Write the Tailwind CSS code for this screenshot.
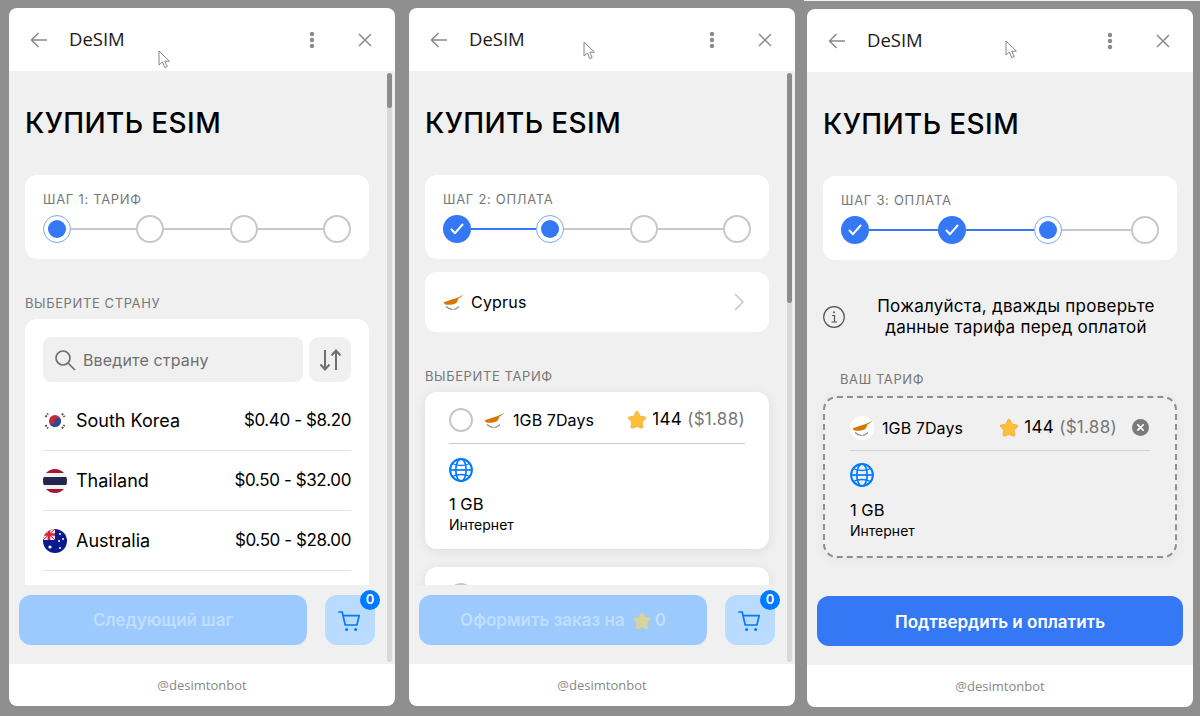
<!DOCTYPE html>
<html lang="ru">
  <head>
    <meta charset="UTF-8" />
    <meta name="viewport" content="width=device-width, initial-scale=1.0" />
    <title>DeSIM</title>
    <script src="https://cdn.jsdelivr.net/npm/@tailwindcss/browser@4"></script>
  </head>
  <body class="relative w-[1200px] h-[716px] overflow-hidden bg-[#8f8f8f] font-['Inter','Noto_Sans',sans-serif] text-black">
    <!-- shared icons -->
    <svg class="hidden">
      <symbol id="back" viewBox="0 0 18 16"><path d="M17 8H1.500M8.500 1 1.500 8l7 7" fill="none" stroke="currentColor" stroke-width="1.500" /></symbol>
      <symbol id="close" viewBox="0 0 14 14"><path d="M1 1l12 12M13 1 1 13" fill="none" stroke="currentColor" stroke-width="1.500" /></symbol>
      <symbol id="dots" viewBox="0 0 6 18"><circle cx="3" cy="3" r="2.200" fill="currentColor" /><circle cx="3" cy="9" r="2.200" fill="currentColor" /><circle cx="3" cy="15" r="2.200" fill="currentColor" /></symbol>
      <symbol id="cursor" viewBox="0 0 14 20"><path d="M1 1v14l3.400-3 2.400 5.600 2.400-1-2.400-5.400h4.600z" fill="#fff" stroke="#777" stroke-width=".9" /></symbol>
      <symbol id="check" viewBox="0 0 14 12"><path d="M1.500 6.500 5 10.200 12.500 1.500" fill="none" stroke="#fff" stroke-width="2" stroke-linecap="round" stroke-linejoin="round" /></symbol>
      <symbol id="cart" viewBox="0 0 24 22"><path d="M1 2h3.200l3 13h11.600l2.400-9.400H5" fill="none" stroke="currentColor" stroke-width="1.700" stroke-linecap="round" stroke-linejoin="round" /><circle cx="8.600" cy="19.600" r="1.500" fill="currentColor" /><circle cx="17.600" cy="19.600" r="1.500" fill="currentColor" /></symbol>
      <symbol id="globe" viewBox="0 0 24 24"><g fill="none" stroke="currentColor"><circle cx="12" cy="12" r="10.900" stroke-width="2" /><ellipse cx="12" cy="12" rx="5.200" ry="11" stroke-width="1.700" /><path d="M1 12h22" stroke-width="1.700" /><path d="M3.500 5.500c2.500 1.500 5.200 2 8.500 2s6-.5 8.500-2M3.500 18.500c2.500-1.500 5.200-2 8.500-2s6 .5 8.500 2" stroke-width="1.400" /></g></symbol>
      <symbol id="star" viewBox="0 0 20 20"><path d="M10 1.200c.6 0 1 .4 1.300 1l1.900 4 4.300.6c1.300.2 1.700 1.400.8 2.300l-3.100 3 .8 4.400c.2 1.300-1 2.100-2.100 1.500L10 16.400l-3.900 1.600c-1.100.6-2.300-.2-2.100-1.500l.8-4.400-3.100-3c-.9-.9-.5-2.100.8-2.300l4.300-.6 1.900-4c.3-.6.7-1 1.300-1z" fill="#fbbf3c" stroke="#f0a020" stroke-width=".6" /></symbol>
      <symbol id="star-muted" viewBox="0 0 20 20"><path d="M10 1.200c.6 0 1 .4 1.300 1l1.900 4 4.300.6c1.300.2 1.700 1.400.8 2.300l-3.100 3 .8 4.400c.2 1.300-1 2.100-2.100 1.500L10 16.400l-3.900 1.600c-1.100.6-2.300-.2-2.100-1.500l.8-4.400-3.100-3c-.9-.9-.5-2.100.8-2.300l4.300-.6 1.900-4c.3-.6.7-1 1.300-1z" fill="#d8d49a" /></symbol>
      <symbol id="cyprus" viewBox="0 0 24 24"><circle cx="12" cy="12" r="12" fill="#fff" /><path d="M2.500 12.500c2.500-1.200 4-1.800 6-2.300 2-.4 3-1 5-1.400 3-.8 6-2.300 9-4.300-1.500 2-3.500 3.400-5.500 4.500-.3 1.500-.5 3.500-2.500 4.500-2.500 1.200-6 1.500-9 1.200-1.500-.2-2.500-1-3-2.700z" fill="#d57800" /><path d="M5 16.500c2 2 4.500 2.800 6.500 3.200M18 16.500c-2 2-4 2.800-5.500 3.200" fill="none" stroke="#8a9a80" stroke-width="1.300" /></symbol>
      <symbol id="chevron" viewBox="0 0 10 18"><path d="M1 1l8 8-8 8" fill="none" stroke="currentColor" stroke-width="1.500" /></symbol>
    </svg>

    <!-- edge of the next picture in the collage -->
    <div class="absolute top-0 right-0 left-[804px] h-[1px] bg-[#f4f4f4]"></div>

    <div class="flex items-start pl-[9px] pt-[8px]">
      <!-- step 1 -->
      <section class="relative flex h-[698px] w-[386px] shrink-0 flex-col overflow-hidden rounded-lg bg-white">
        <header class="flex h-[63px] shrink-0 items-center pl-[21px] pr-[23px]">
          <svg class="h-[16px] w-[18px] text-[#8a8a8a]"><use href="#back" /></svg>
          <span class="ml-[21px] pb-[2px] font-['Open_Sans',sans-serif] text-[18.500px] font-medium text-[#1a1a1a]">DeSIM</span>
          <svg class="ml-auto mr-[43px] h-[18px] w-[6px] text-[#8a8a8a]"><use href="#dots" /></svg>
          <svg class="h-[14px] w-[14px] text-[#8a8a8a]"><use href="#close" /></svg>
        </header>
        <main class="relative flex-1 overflow-hidden bg-[#f0f0f0] pl-[16px] pr-[26px]">
          <h1 class="mt-[34px] text-[28px] leading-[36px] font-medium tracking-[0.4px]">КУПИТЬ ESIM</h1>
          <div class="mt-[34px] h-[84px] rounded-[12px] bg-white px-[18px] pt-[16px]">
            <p class="text-[13px] leading-[16px] tracking-[0.7px] text-[#777]">ШАГ 1: ТАРИФ</p>
            <div class="mt-[8px] flex items-center">
              <span class="flex size-[28px] shrink-0 items-center justify-center rounded-full border border-[#7aa7f8]"><span class="size-[18px] rounded-full bg-[#3478f6]"></span></span>
              <span class="h-[2px] flex-1 bg-[#c8c8cc]"></span>
              <span class="size-[28px] shrink-0 rounded-full border-2 border-[#c8c8cc]"></span>
              <span class="h-[2px] flex-1 bg-[#c8c8cc]"></span>
              <span class="size-[28px] shrink-0 rounded-full border-2 border-[#c8c8cc]"></span>
              <span class="h-[2px] flex-1 bg-[#c8c8cc]"></span>
              <span class="size-[28px] shrink-0 rounded-full border-2 border-[#c8c8cc]"></span>
            </div>
          </div>
          <p class="mt-[36px] text-[13px] leading-[16px] tracking-[0.6px] text-[#777]">ВЫБЕРИТЕ СТРАНУ</p>
          <div class="mt-[8px] rounded-[12px] bg-white px-[18px] pt-[18px] pb-[40px]">
            <div class="flex gap-[6px]">
              <div class="flex h-[45px] flex-1 items-center rounded-[8px] bg-[#f0f0f0] pl-[11px] text-[#6f6f6f]">
                <svg class="h-[22px] w-[22px]" viewBox="0 0 22 22" fill="none" stroke="currentColor" stroke-width="1.700"><circle cx="9" cy="9" r="7" /><path d="M14 14l7 7" /></svg>
                <span class="ml-[7px] text-[16px] tracking-[0.15px]">Введите страну</span>
              </div>
              <div class="flex h-[45px] w-[42px] items-center justify-center rounded-[10px] bg-[#f0f0f0] text-[#6f6f6f]">
                <svg class="h-[22px] w-[23px]" viewBox="0 0 23 22" fill="none" stroke="currentColor" stroke-width="2"><path d="M6 1v19M1.500 15.500 6 20.500l4.500-5M17 21V2M12.500 6.500 17 1.500l4.500 5" /></svg>
              </div>
            </div>
            <div class="mt-[9px] flex h-[60px] items-center border-b border-[#e2e2e2] pt-[1px]">
              <svg class="size-[24px]" viewBox="0 0 24 24"><circle cx="12" cy="12" r="6" fill="#c8283c" /><path d="M6 12a3 3 0 0 0 6 0 3 3 0 0 1 6 0 6 6 0 0 1-12 0z" fill="#1f4f9a" /><g stroke="#555" stroke-width="2" stroke-dasharray="2 1"><path d="M2.500 8 5 4.500M19 4.500 21.500 8M2.500 16 5 19.500M19 19.500 21.500 16" /></g></svg>
              <span class="ml-[9px] pb-[1px] text-[18px]">South Korea</span>
              <span class="ml-auto text-[17px] tracking-[-0.4px]">$0.40 - $8.20</span>
            </div>
            <div class="flex h-[60px] items-center border-b border-[#e2e2e2] pt-[1px]">
              <svg class="size-[24px]" viewBox="0 0 24 24"><defs><clipPath id="flag-clip"><circle cx="12" cy="12" r="12" /></clipPath></defs><g clip-path="url(#flag-clip)"><rect width="24" height="24" fill="#f2f2f2" /><rect width="24" height="4" fill="#a8152f" /><rect y="20" width="24" height="4" fill="#a8152f" /><rect y="8" width="24" height="8" fill="#25264f" /></g></svg>
              <span class="ml-[9px] pb-[1px] text-[18px]">Thailand</span>
              <span class="ml-auto text-[17px] tracking-[-0.4px]">$0.50 - $32.00</span>
            </div>
            <div class="flex h-[60px] items-center border-b border-[#e2e2e2] pt-[1px]">
              <svg class="size-[24px]" viewBox="0 0 24 24"><g clip-path="url(#flag-clip)"><rect width="24" height="24" fill="#0a1a8c" /><rect width="12" height="11" fill="#e8e8f0" /><path d="M0 5.500h12M6 0v11" stroke="#d8203a" stroke-width="2.500" /><path d="M0 0l12 11M12 0 0 11" stroke="#d8203a" stroke-width="1" /></g><g fill="#fff"><circle cx="7" cy="18" r="1.600" /><circle cx="17" cy="5" r="1" /><circle cx="20" cy="10" r="1" /><circle cx="16" cy="12" r="1" /><circle cx="17" cy="19" r="1" /></g></svg>
              <span class="ml-[9px] pb-[1px] text-[18px]">Australia</span>
              <span class="ml-auto text-[17px] tracking-[-0.4px]">$0.50 - $28.00</span>
            </div>
          </div>
          <!-- sticky bottom bar -->
          <div class="absolute inset-x-0 bottom-0 flex h-[79px] gap-[18px] bg-[#f0f0f0] pt-[10px] pl-[10px] pr-[20px]">
            <button class="h-[50px] w-[288px] rounded-[12px] bg-[#9ccaff] pt-[1px] text-[17px] font-semibold text-white/40">Следующий шаг</button>
            <div class="relative flex h-[50px] w-[50px] items-center justify-center rounded-[12px] bg-[#b9dbff] text-[#007aff]">
              <svg class="mt-[2px] h-[22px] w-[24px]"><use href="#cart" /></svg>
              <span class="absolute -top-[5px] -right-[5px] flex size-[20px] items-center justify-center rounded-full bg-[#007aff] text-[13px] font-semibold text-white">0</span>
            </div>
          </div>
          <div class="absolute top-[2px] bottom-[2px] right-[3px] w-[5px] rounded-full bg-[#d8d8d8]"><div class="h-[35px] rounded-full bg-[#8c8c8c]"></div></div>
        </main>
        <footer class="flex h-[42px] shrink-0 items-center justify-center pt-[1px] font-['Open_Sans',sans-serif] text-[13px] text-[#888]">@desimtonbot</footer>
        <svg class="absolute top-[42px] left-[149px] h-[20px] w-[14px]"><use href="#cursor" /></svg>
      </section>

      <!-- step 2 -->
      <section class="relative ml-[14px] flex h-[698px] w-[386px] shrink-0 flex-col overflow-hidden rounded-lg bg-white">
        <header class="flex h-[63px] shrink-0 items-center pl-[21px] pr-[23px]">
          <svg class="h-[16px] w-[18px] text-[#8a8a8a]"><use href="#back" /></svg>
          <span class="ml-[21px] pb-[2px] font-['Open_Sans',sans-serif] text-[18.500px] font-medium text-[#1a1a1a]">DeSIM</span>
          <svg class="ml-auto mr-[43px] h-[18px] w-[6px] text-[#8a8a8a]"><use href="#dots" /></svg>
          <svg class="h-[14px] w-[14px] text-[#8a8a8a]"><use href="#close" /></svg>
        </header>
        <main class="relative flex-1 overflow-hidden bg-[#f0f0f0] pl-[16px] pr-[26px]">
          <h1 class="mt-[34px] text-[28px] leading-[36px] font-medium tracking-[0.4px]">КУПИТЬ ESIM</h1>
          <div class="mt-[34px] h-[84px] rounded-[12px] bg-white px-[18px] pt-[16px]">
            <p class="text-[13px] leading-[16px] tracking-[0.7px] text-[#777]">ШАГ 2: ОПЛАТА</p>
            <div class="mt-[8px] flex items-center">
              <span class="flex size-[28px] shrink-0 items-center justify-center rounded-full bg-[#3478f6]"><svg class="h-[12px] w-[14px]"><use href="#check" /></svg></span>
              <span class="h-[2px] flex-1 bg-[#3478f6]"></span>
              <span class="flex size-[28px] shrink-0 items-center justify-center rounded-full border border-[#7aa7f8]"><span class="size-[18px] rounded-full bg-[#3478f6]"></span></span>
              <span class="h-[2px] flex-1 bg-[#c8c8cc]"></span>
              <span class="size-[28px] shrink-0 rounded-full border-2 border-[#c8c8cc]"></span>
              <span class="h-[2px] flex-1 bg-[#c8c8cc]"></span>
              <span class="size-[28px] shrink-0 rounded-full border-2 border-[#c8c8cc]"></span>
            </div>
          </div>
          <div class="mt-[13px] flex h-[60px] items-center rounded-[12px] bg-white pl-[16px] pr-[25px]">
            <svg class="size-[24px]"><use href="#cyprus" /></svg>
            <span class="ml-[6px] text-[16px] tracking-[0.2px]">Cyprus</span>
            <svg class="ml-auto h-[18px] w-[10px] text-[#c4c4c4]"><use href="#chevron" /></svg>
          </div>
          <p class="mt-[36px] text-[13px] leading-[16px] tracking-[0.6px] text-[#777]">ВЫБЕРИТЕ ТАРИФ</p>
          <div class="mt-[8px] h-[157px] rounded-[12px] bg-white px-[24px] pt-[15px] shadow-[0_2px_12px_rgba(0,0,0,0.08)]">
            <div class="flex items-center">
              <span class="size-[24px] shrink-0 rounded-full border-2 border-[#c8c8cc]"></span>
              <svg class="ml-[9px] size-[24px]"><use href="#cyprus" /></svg>
              <span class="ml-[7px] text-[16px] tracking-[0.1px]">1GB 7Days</span>
              <svg class="ml-auto h-[20px] w-[20px]"><use href="#star" /></svg>
              <span class="ml-[5px] text-[17px] tracking-[0.3px]">144 <span class="text-[#777]">($1.88)</span></span>
            </div>
            <div class="mt-[10px] border-t border-[#c8c8c8]"></div>
            <svg class="mt-[14px] size-[24px] text-[#007aff]"><use href="#globe" /></svg>
            <p class="mt-[12px] text-[16.500px] leading-[20px]">1 GB</p>
            <p class="mt-[2px] text-[14px] leading-[18px]">Интернет</p>
          </div>
          <div class="mt-[18px] h-[100px] rounded-[12px] bg-white px-[24px] pt-[16px] shadow-[0_2px_12px_rgba(0,0,0,0.08)]">
            <span class="block size-[24px] rounded-full border-2 border-[#c8c8cc]"></span>
          </div>
          <!-- sticky bottom bar -->
          <div class="absolute inset-x-0 bottom-0 flex h-[79px] gap-[18px] bg-[#f0f0f0] pt-[10px] pl-[10px] pr-[20px]">
            <button class="flex h-[50px] w-[288px] items-center justify-center rounded-[12px] bg-[#9ccaff] pt-[1px] text-[17px] font-semibold text-white/40">Оформить заказ на <svg class="mr-[3px] ml-[7px] h-[20px] w-[20px]"><use href="#star-muted" /></svg> 0</button>
            <div class="relative flex h-[50px] w-[50px] items-center justify-center rounded-[12px] bg-[#b9dbff] text-[#007aff]">
              <svg class="mt-[2px] h-[22px] w-[24px]"><use href="#cart" /></svg>
              <span class="absolute -top-[5px] -right-[5px] flex size-[20px] items-center justify-center rounded-full bg-[#007aff] text-[13px] font-semibold text-white">0</span>
            </div>
          </div>
          <div class="absolute top-[2px] bottom-[2px] right-[3px] w-[5px] rounded-full bg-[#d8d8d8]"><div class="h-[230px] rounded-full bg-[#8c8c8c]"></div></div>
        </main>
        <footer class="flex h-[42px] shrink-0 items-center justify-center pt-[1px] font-['Open_Sans',sans-serif] text-[13px] text-[#888]">@desimtonbot</footer>
        <svg class="absolute top-[33px] left-[174px] h-[20px] w-[14px]"><use href="#cursor" /></svg>
      </section>

      <!-- step 3 -->
      <section class="relative mt-[1px] ml-[12px] flex h-[698px] w-[386px] shrink-0 flex-col overflow-hidden rounded-lg bg-white">
        <header class="flex h-[63px] shrink-0 items-center pl-[21px] pr-[23px]">
          <svg class="h-[16px] w-[18px] text-[#8a8a8a]"><use href="#back" /></svg>
          <span class="ml-[21px] pb-[2px] font-['Open_Sans',sans-serif] text-[18.500px] font-medium text-[#1a1a1a]">DeSIM</span>
          <svg class="ml-auto mr-[43px] h-[18px] w-[6px] text-[#8a8a8a]"><use href="#dots" /></svg>
          <svg class="h-[14px] w-[14px] text-[#8a8a8a]"><use href="#close" /></svg>
        </header>
        <main class="relative flex-1 overflow-hidden bg-[#f0f0f0] px-[16px]">
          <h1 class="mt-[34px] text-[28px] leading-[36px] font-medium tracking-[0.4px]">КУПИТЬ ESIM</h1>
          <div class="mt-[34px] h-[84px] rounded-[12px] bg-white px-[18px] pt-[16px]">
            <p class="text-[13px] leading-[16px] tracking-[0.7px] text-[#777]">ШАГ 3: ОПЛАТА</p>
            <div class="mt-[8px] flex items-center">
              <span class="flex size-[28px] shrink-0 items-center justify-center rounded-full bg-[#3478f6]"><svg class="h-[12px] w-[14px]"><use href="#check" /></svg></span>
              <span class="h-[2px] flex-1 bg-[#3478f6]"></span>
              <span class="flex size-[28px] shrink-0 items-center justify-center rounded-full bg-[#3478f6]"><svg class="h-[12px] w-[14px]"><use href="#check" /></svg></span>
              <span class="h-[2px] flex-1 bg-[#3478f6]"></span>
              <span class="flex size-[28px] shrink-0 items-center justify-center rounded-full border border-[#7aa7f8]"><span class="size-[18px] rounded-full bg-[#3478f6]"></span></span>
              <span class="h-[2px] flex-1 bg-[#c8c8cc]"></span>
              <span class="size-[28px] shrink-0 rounded-full border-2 border-[#c8c8cc]"></span>
            </div>
          </div>
          <div class="mt-[36px] flex items-center">
            <svg class="size-[22px] shrink-0 text-[#555]" viewBox="0 0 22 22" fill="none" stroke="currentColor" stroke-width="1.200"><circle cx="11" cy="11" r="10.300" /><path d="M9 9.500h2.500V16M8.500 16h5.500" /><circle cx="11" cy="6.300" r="1" fill="currentColor" stroke="none" /></svg>
            <p class="flex-1 pl-[10px] text-center text-[17px] leading-[21px] tracking-[0.25px]">Пожалуйста, дважды проверьте<br />данные тарифа перед оплатой</p>
          </div>
          <p class="mt-[33px] pl-[17px] text-[13px] leading-[16px] tracking-[0.6px] text-[#777]">ВАШ ТАРИФ</p>
          <div class="mt-[9px] h-[162px] rounded-[14px] border-2 border-dashed border-[#8f8f8f] px-[25px] pt-[17px] shadow-[0_2px_12px_rgba(0,0,0,0.05)]">
            <div class="flex items-center">
              <svg class="size-[24px]"><use href="#cyprus" /></svg>
              <span class="ml-[8px] text-[16px] tracking-[0.1px]">1GB 7Days</span>
              <svg class="ml-auto h-[20px] w-[20px]"><use href="#star" /></svg>
              <span class="ml-[5px] text-[17px] tracking-[0.3px]">144 <span class="text-[#777]">($1.88)</span></span>
              <svg class="mr-[1px] ml-[15px] size-[17px]" viewBox="0 0 17 17"><circle cx="8.500" cy="8.500" r="8.500" fill="#7a7a7a" /><path d="M5.800 5.800l5.400 5.400M11.200 5.800l-5.400 5.400" stroke="#fff" stroke-width="1.700" stroke-linecap="round" /></svg>
            </div>
            <div class="mt-[9px] border-t border-[#d4d4d4]"></div>
            <svg class="mt-[12px] size-[24px] text-[#007aff]"><use href="#globe" /></svg>
            <p class="mt-[13px] text-[16.500px] leading-[20px]">1 GB</p>
            <p class="mt-[2px] text-[14px] leading-[18px]">Интернет</p>
          </div>
          <div class="absolute inset-x-0 bottom-0 h-[79px] bg-[#f0f0f0] px-[10px] pt-[10px]">
            <button class="h-[50px] w-full rounded-[12px] bg-[#3478f6] pt-[3px] text-[17px] font-semibold text-white">Подтвердить и оплатить</button>
          </div>
        </main>
        <footer class="flex h-[42px] shrink-0 items-center justify-center pt-[1px] font-['Open_Sans',sans-serif] text-[13px] text-[#888]">@desimtonbot</footer>
        <svg class="absolute top-[31px] left-[198px] h-[20px] w-[14px]"><use href="#cursor" /></svg>
      </section>
    </div>
  </body>
</html>
